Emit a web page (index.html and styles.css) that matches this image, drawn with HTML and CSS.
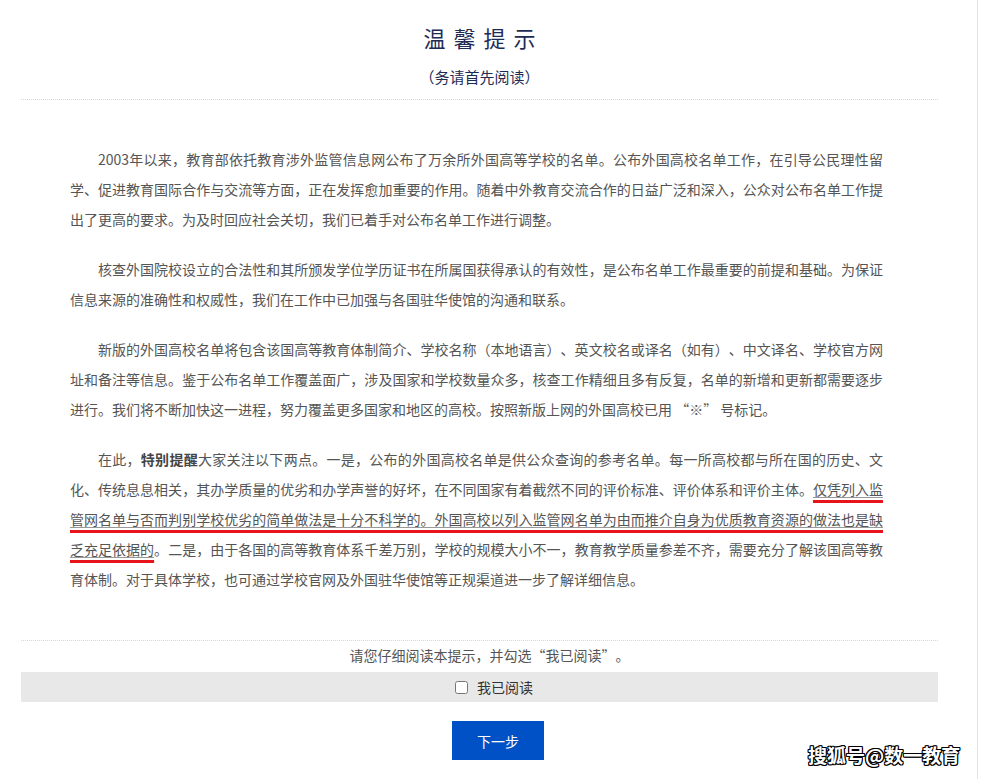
FILE: index.html
```html
<!DOCTYPE html>
<html lang="zh-CN">
<head>
    <meta charset="UTF-8">
    <meta name="viewport" content="width=device-width, initial-scale=1.0">
    <title>温馨提示</title>
    <link rel="stylesheet" href="styles.css">
</head>
<body>

    <div class="page">
        <div class="notice-box">
            <div class="notice-head">
                <h1 class="notice-title">温馨提示</h1>
                <p class="notice-sub">（务请首先阅读）</p>
            </div>

            <div class="notice-body">
                <p>2003年以来，教育部依托教育涉外监管信息网公布了万余所外国高等学校的名单。公布外国高校名单工作，在引导公民理性留学、促进教育国际合作与交流等方面，正在发挥愈加重要的作用。随着中外教育交流合作的日益广泛和深入，公众对公布名单工作提出了更高的要求。为及时回应社会关切，我们已着手对公布名单工作进行调整。</p>
                <p>核查外国院校设立的合法性和其所颁发学位学历证书在所属国获得承认的有效性，是公布名单工作最重要的前提和基础。为保证信息来源的准确性和权威性，我们在工作中已加强与各国驻华使馆的沟通和联系。</p>
                <p>新版的外国高校名单将包含该国高等教育体制简介、学校名称（本地语言）、英文校名或译名（如有）、中文译名、学校官方网址和备注等信息。鉴于公布名单工作覆盖面广，涉及国家和学校数量众多，核查工作精细且多有反复，名单的新增和更新都需要逐步进行。我们将不断加快这一进程，努力覆盖更多国家和地区的高校。按照新版上网的外国高校已用 “※” 号标记。</p>
                <p>在此，<strong>特别提醒</strong>大家关注以下两点。一是，公布的外国高校名单是供公众查询的参考名单。每一所高校都与所在国的历史、文化、传统息息相关，其办学质量的优劣和办学声誉的好坏，在不同国家有着截然不同的评价标准、评价体系和评价主体。<span class="mark-red"><span class="mark-line">仅凭列入监管网名单与否而判别学校优劣的简单做法是十分不科学的。外国高校以列入监管网名单为由而推介自身为优质教育资源的做法也是缺乏充足依据的</span></span>。二是，由于各国的高等教育体系千差万别，学校的规模大小不一，教育教学质量参差不齐，需要充分了解该国高等教育体制。对于具体学校，也可通过学校官网及外国驻华使馆等正规渠道进一步了解详细信息。</p>
            </div>

            <div class="notice-foot">
                <p class="foot-tip">请您仔细阅读本提示，并勾选“我已阅读”。</p>
                <label class="read-bar">
                    <input type="checkbox" class="read-check">
                    <span>我已阅读</span>
                </label>
                <div class="btn-row">
                    <button class="next-btn">下一步</button>
                </div>
            </div>
        </div>
    </div>

    <div class="watermark">搜狐号@数一教育</div>

</body>
</html>
```

FILE: styles.css
```css
body {
    margin: 0;
    font-family: "Noto Sans CJK SC", "Noto Sans", sans-serif;
    color: #555;
    background: #fff;
    text-spacing-trim: space-all;
}
.page {
    width: 978px;
    min-height: 779px;
    border-right: 1px solid #e2e2e2;
    box-sizing: border-box;
    padding-top: 22px;
}
.notice-box {
    margin-left: 21px;
    width: 917px;
}
.notice-head {
    text-align: center;
    padding-bottom: 10px;
    border-bottom: 1px dotted #c9d9e8;
}
.notice-title {
    margin: 0;
    font-size: 22px;
    font-weight: normal;
    line-height: 30px;
    letter-spacing: 8px;
    padding-left: 8px;
    color: #1d2b55;
}
.notice-sub {
    margin: 13px 0 0;
    font-size: 15px;
    line-height: 24px;
    color: #1d2b55;
}
.notice-body {
    padding: 44px 55px 26px 49px;
    border-bottom: 1px dotted #c9d9e8;
}
.notice-body p {
    margin: 0 0 20px;
    font-size: 14px;
    line-height: 30px;
    text-indent: 2em;
    text-align: justify;
}
.notice-body strong {
    color: #444;
}
.mark-red {
    text-decoration: underline;
    text-decoration-color: #e8141b;
    text-decoration-thickness: 3px;
    text-underline-offset: 5px;
}
.mark-line {
    text-decoration: underline;
    text-decoration-color: #999;
    text-decoration-thickness: 1px;
    text-underline-offset: 2px;
}
.foot-tip {
    margin: 0;
    padding-left: 20px;
    font-size: 14px;
    line-height: 28px;
    text-align: center;
}
.read-bar {
    display: flex;
    align-items: center;
    justify-content: center;
    margin-top: 3px;
    height: 30px;
    padding-left: 29px;
    background-color: #e8e8e8;
    font-size: 14px;
    color: #333;
    cursor: pointer;
}
.read-check {
    width: 13px;
    height: 13px;
    margin: 0 9px 0 0;
}
.btn-row {
    display: flex;
    justify-content: center;
    padding-left: 37px;
    margin-top: 19px;
}
.next-btn {
    width: 92px;
    height: 39px;
    border: none;
    background-color: #0050c6;
    color: white;
    font-family: "Noto Sans CJK SC", sans-serif;
    font-size: 14px;
    cursor: pointer;
}
.watermark {
    position: absolute;
    left: 808px;
    top: 742px;
    font-size: 19px;
    font-weight: bold;
    line-height: 26px;
    color: #fff;
    text-shadow: -1px -1px 0 #000, 1px -1px 0 #000, -1px 1px 0 #000, 1px 1px 0 #000, 0 1px 0 #000, 0 -1px 0 #000, 1px 0 0 #000, -1px 0 0 #000;
}
```
